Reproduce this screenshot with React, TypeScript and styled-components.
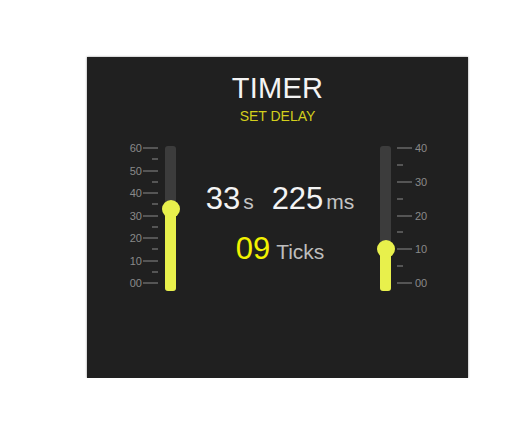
import React from 'react';
import styled, { createGlobalStyle } from 'styled-components';

const GlobalStyle = createGlobalStyle`
  html, body {
    margin: 0;
    padding: 0;
    background: #ffffff;
  }
  body {
    font-family: "Liberation Sans", Arial, sans-serif;
  }
`;

interface SliderProps {
  max: number;
  step: number;
  value: number;
  side: 'left' | 'right';
}

// tick rows run from just under the track top to a bit above its bottom
const TRACK_HEIGHT = 145;
const PAD_TOP = 1;
const PAD_BOTTOM = 7;

const pad = (n: number) => (n < 10 ? `0${n}` : `${n}`);

const Slider: React.FC<SliderProps> = ({ max, step, value, side }) => {
  const rows: { major: boolean; label?: string }[] = [];
  for (let v = max; v >= 0; v -= step / 2) {
    const major = v % step === 0;
    rows.push({ major, label: major ? pad(v) : undefined });
  }

  const usable = TRACK_HEIGHT - PAD_TOP - PAD_BOTTOM - 2;
  const knobY = PAD_TOP + 1 + (1 - value / max) * usable;

  const scale = (
    <Scale>
      {rows.map((r, i) => (
        <TickRow key={i} $side={side}>
          <TickLabel $side={side}>{r.label}</TickLabel>
          <Tick $major={r.major} $side={side} />
        </TickRow>
      ))}
    </Scale>
  );

  const track = (
    <Track>
      <Fill style={{ top: knobY }} />
      <Knob style={{ top: knobY }} />
    </Track>
  );

  return (
    <SliderWrap $side={side}>
      {side === 'left' ? (
        <>
          {scale}
          {track}
        </>
      ) : (
        <>
          {track}
          {scale}
        </>
      )}
    </SliderWrap>
  );
};

const App: React.FC = () => {
  return (
    <>
      <GlobalStyle />
      <Page>
        <Panel>
          <Header>
            <Title>TIMER</Title>
            <Subtitle>SET DELAY</Subtitle>
          </Header>
          <Body>
            <Slider max={60} step={10} value={33} side="left" />
            <Readout>
              <ReadoutLine>
                <Big>33</Big>
                <Unit>s</Unit>
                <Spacer />
                <Big>225</Big>
                <Unit>ms</Unit>
              </ReadoutLine>
              <ReadoutLine>
                <Big $accent>09</Big>
                <TicksUnit>Ticks</TicksUnit>
              </ReadoutLine>
            </Readout>
            <Slider max={40} step={10} value={10} side="right" />
          </Body>
        </Panel>
      </Page>
    </>
  );
};

const Page = styled.div`
  padding: 57px 0 0 87px;
`;

const Panel = styled.div`
  width: 381px;
  height: 321px;
  box-sizing: border-box;
  background: #202020;
  box-shadow: 0 0 2px rgba(0, 0, 0, 0.45);
  padding: 14px 39px 0 41px;
  display: flex;
  flex-direction: column;
`;

const Header = styled.div`
  display: flex;
  flex-direction: column;
  align-items: center;
  margin-bottom: 22px;
`;

const Title = styled.div`
  font-size: 29px;
  line-height: 34px;
  color: #f4f4f4;
  letter-spacing: 0.3px;
  padding-right: 2px;
`;

const Subtitle = styled.div`
  margin-top: 3px;
  font-size: 14px;
  line-height: 16px;
  color: #d3cf1c;
  padding-right: 2px;
`;

const Body = styled.div`
  display: flex;
  justify-content: space-between;
  align-items: stretch;
`;

const SliderWrap = styled.div<{ $side: 'left' | 'right' }>`
  display: flex;
  height: ${TRACK_HEIGHT}px;
  gap: ${(p) => (p.$side === 'left' ? '7px' : '6px')};
`;

const Scale = styled.div`
  display: flex;
  flex-direction: column;
  justify-content: space-between;
  padding: ${PAD_TOP}px 0 ${PAD_BOTTOM}px;
`;

const TickRow = styled.div<{ $side: 'left' | 'right' }>`
  display: flex;
  flex-direction: ${(p) => (p.$side === 'left' ? 'row' : 'row-reverse')};
  align-items: center;
  height: 2px;
  gap: ${(p) => (p.$side === 'left' ? '1px' : '3px')};
`;

const TickLabel = styled.span<{ $side: 'left' | 'right' }>`
  width: 14px;
  font-size: 11px;
  line-height: 2px;
  color: #8a8a8a;
  text-align: ${(p) => (p.$side === 'left' ? 'right' : 'left')};
  white-space: nowrap;
`;

const Tick = styled.div<{ $major: boolean; $side: 'left' | 'right' }>`
  width: 15px;
  height: 2px;
  display: flex;
  justify-content: ${(p) => (p.$side === 'left' ? 'flex-end' : 'flex-start')};

  &::after {
    content: '';
    width: ${(p) => (p.$major ? '15px' : '6px')};
    height: 2px;
    background: #555555;
  }
`;

const Track = styled.div`
  position: relative;
  width: 11px;
  height: 100%;
  background: #3c3c3c;
  border-radius: 3px;
`;

const Fill = styled.div`
  position: absolute;
  left: 0;
  right: 0;
  bottom: 0;
  background: #e8f04c;
  border-radius: 0 0 3px 3px;
`;

const Knob = styled.div`
  position: absolute;
  left: 50%;
  width: 18px;
  height: 18px;
  margin: -9px 0 0 -9px;
  border-radius: 50%;
  background: #e8f04c;
`;

const Readout = styled.div`
  flex: 1;
  display: flex;
  flex-direction: column;
  align-items: center;
  padding-top: 35px;
  gap: 14px;
`;

const ReadoutLine = styled.div`
  display: flex;
  align-items: baseline;
  height: 36px;
  line-height: 36px;
  padding-left: 4px;
`;

const Big = styled.span<{ $accent?: boolean }>`
  font-size: 31px;
  color: ${(p) => (p.$accent ? '#f2f200' : '#f4f4f4')};
`;

const Unit = styled.span`
  font-size: 21px;
  color: #c4c4c4;
  margin-left: 3px;
`;

const Spacer = styled.span`
  width: 18px;
`;

const TicksUnit = styled.span`
  font-size: 21px;
  color: #bdbdbd;
  margin-left: 6px;
`;

export default App;
